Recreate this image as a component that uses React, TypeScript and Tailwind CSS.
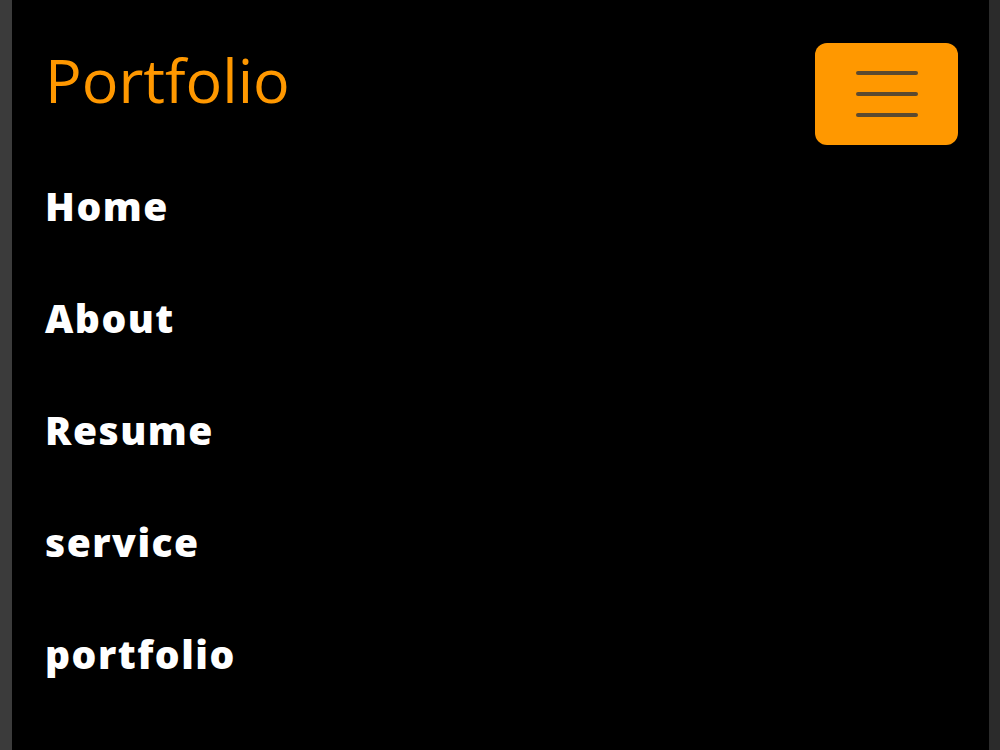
import React from "react";

const links = ["Home", "About", "Resume", "service", "portfolio", "contact"];

export default function App() {
  return (
    <div className="flex h-[750px] w-[1000px] overflow-hidden bg-black">
      <div className="w-[12px] shrink-0 bg-[#3b3b3b]" />
      <main className="flex-1 bg-black pl-[33px] pr-[31px]">
        <header className="flex items-start justify-between pt-[43px]">
          <a
            href="#"
            className="mt-[5px] text-[61px] leading-[64px] text-[#ff9800]"
            style={{ fontFamily: '"Open Sans", "Noto Sans", sans-serif' }}
          >
            Portfolio
          </a>
          <button
            type="button"
            aria-label="Toggle navigation"
            className="flex h-[102px] w-[143px] flex-col items-center justify-center gap-[17px] rounded-[12px] bg-[#ff9800]"
          >
            <span className="block h-[4px] w-[62px] rounded-full bg-[#5b4a30]" />
            <span className="block h-[4px] w-[62px] rounded-full bg-[#5b4a30]" />
            <span className="block h-[4px] w-[62px] rounded-full bg-[#5b4a30]" />
          </button>
        </header>
        <ul
          className="mt-[5px] flex flex-col"
          style={{ fontFamily: '"Open Sans", "Noto Sans", sans-serif' }}
        >
          {links.map((l) => (
            <li
              key={l}
              className="h-[112px] text-[39px] font-extrabold leading-[112px] tracking-[1.5px] text-white"
            >
              <a href="#">{l}</a>
            </li>
          ))}
        </ul>
      </main>
      <div className="w-[11px] shrink-0 bg-[#2b2b2b]" />
    </div>
  );
}
